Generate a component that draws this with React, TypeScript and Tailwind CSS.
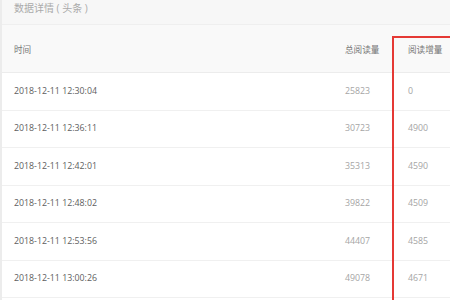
const rows = [
  { time: '2018-12-11 12:30:04', total: '25823', inc: '0' },
  { time: '2018-12-11 12:36:11', total: '30723', inc: '4900' },
  { time: '2018-12-11 12:42:01', total: '35313', inc: '4590' },
  { time: '2018-12-11 12:48:02', total: '39822', inc: '4509' },
  { time: '2018-12-11 12:53:56', total: '44407', inc: '4585' },
  { time: '2018-12-11 13:00:26', total: '49078', inc: '4671' },
];

export default function App() {
  return (
    <div className="w-[450px] h-[300px] overflow-hidden bg-white">
      <div
        className="relative w-[520px] h-[300px] border-l-2 border-[#ececec]"
        style={{ fontFamily: '"Open Sans", "Noto Sans CJK SC", sans-serif' }}
      >
        {/* title */}
        <div className="h-[25px] flex items-start pt-[1px] pl-[12px] bg-[#f7f7f7] border-b border-[#efefef] text-[10px] leading-[14px] text-[#aaa]">
          数据详情 ( 头条 )
        </div>

        {/* header */}
        <div className="h-[48px] grid grid-cols-[343px_47px_1fr] items-center pt-[3px] bg-[#f9f9f9] border-b border-[#ececec] text-[8.6px] text-[#777]">
          <div className="pl-[12px]">时间</div>
          <div>总阅读量</div>
          <div className="pl-[16px]">阅读增量</div>
        </div>

        {/* rows */}
        {rows.map(r => (
          <div
            key={r.time}
            className="h-[37.5px] grid grid-cols-[343px_47px_1fr] items-center border-b border-[#f0f0f0] text-[8.8px]"
          >
            <div className="pl-[12px] text-[#606060]">{r.time}</div>
            <div className="text-[#a5a5a5]">{r.total}</div>
            <div className="pl-[16px] text-[#a5a5a5]">{r.inc}</div>
          </div>
        ))}

        {/* red highlight box */}
        <div className="absolute left-[390px] top-[36px] w-[100px] h-[300px] border-[2.5px] border-[#e53935]" />
      </div>
    </div>
  );
}
